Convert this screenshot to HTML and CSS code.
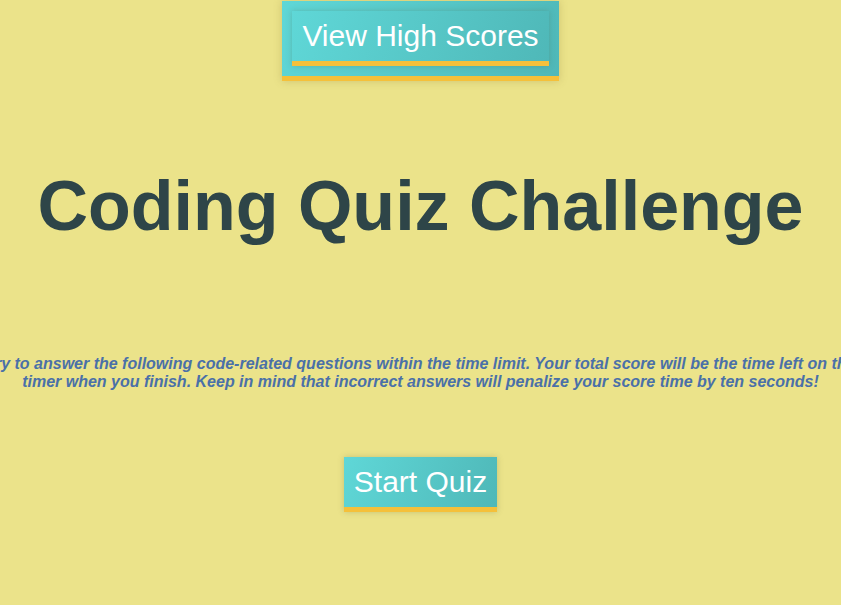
FILE: index.html
```html
<!DOCTYPE html>
<html lang="en">
<head>
<meta charset="utf-8">
<title>Coding Quiz Challenge</title>
<link rel="stylesheet" href="styles.css">
</head>
<body>
  <main class="page">
    <header class="scores-bar">
      <button class="btn" type="button">View High Scores</button>
    </header>
    <h1 class="title">Coding Quiz Challenge</h1>
    <p class="intro">Try to answer the following code-related questions within the time limit. Your total score will be the time left on the timer when you finish. Keep in mind that incorrect answers will penalize your score time by ten seconds!</p>
    <button class="btn start" type="button">Start Quiz</button>
  </main>
</body>
</html>
```

FILE: styles.css
```css
html, body {
  margin: 0;
  padding: 0;
}

body {
  background: #ebe38a;
  font-family: "Liberation Sans", Arial, Helvetica, sans-serif;
  overflow: hidden;
}

.page {
  display: flex;
  flex-direction: column;
  align-items: center;
  min-height: 605px;
}

.scores-bar {
  margin-top: 1px;
  padding: 10px;
  background: linear-gradient(110deg, #5fd7d7 0%, #4fb8b8 100%);
  border-bottom: 5px solid #f5c03a;
  box-shadow: 0 0 8px rgba(120, 100, 40, 0.25);
}

.btn {
  display: block;
  margin: 0;
  padding: 8px 10px;
  font-family: "Liberation Sans", Arial, Helvetica, sans-serif;
  font-size: 30px;
  line-height: 34px;
  color: #ffffff;
  background: linear-gradient(110deg, #5fd7d7 0%, #4fb8b8 100%);
  border: none;
  border-bottom: 5px solid #f5c03a;
  box-shadow: 0 0 6px rgba(80, 90, 60, 0.25);
  cursor: pointer;
}

.title {
  margin: 86px 0 0;
  font-size: 70px;
  font-weight: bold;
  line-height: 78px;
  color: #2e4548;
  white-space: nowrap;
}

.intro {
  width: 900px;
  flex-shrink: 0;
  margin: 110px 0 0;
  font-size: 16px;
  line-height: 18.4px;
  font-weight: bold;
  font-style: italic;
  color: #4a70a8;
  text-align: center;
}

.start {
  margin-top: 65px;
}
```
